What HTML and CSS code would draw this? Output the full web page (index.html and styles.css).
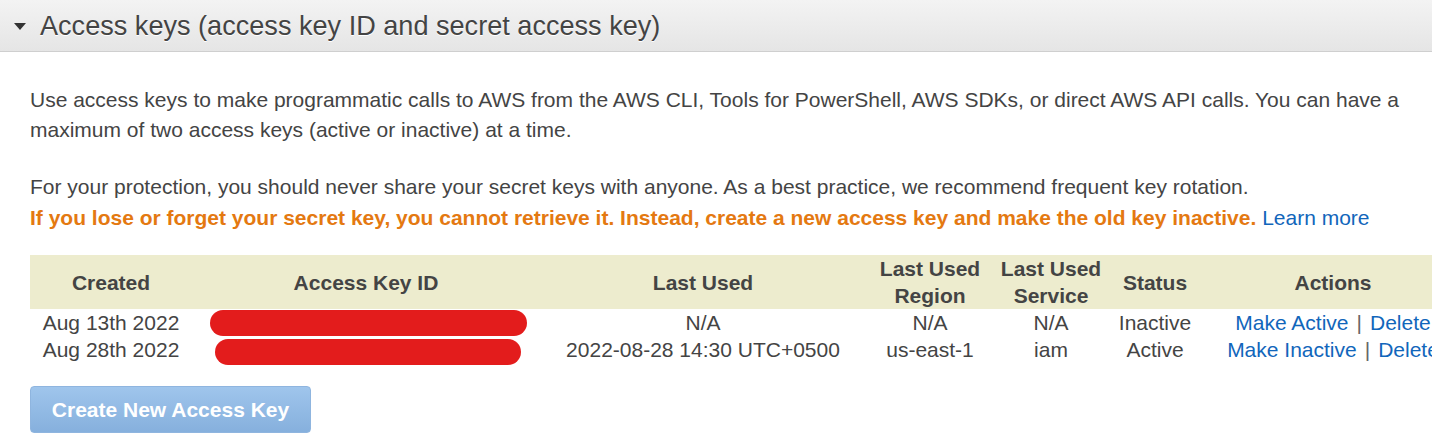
FILE: index.html
```html
<!DOCTYPE html>
<html>
<head>
<meta charset="utf-8">
<link rel="stylesheet" href="styles.css">
</head>
<body>
<div class="section-head">
  <span class="caret"></span>
  <h2 class="title">Access keys (access key ID and secret access key)</h2>
</div>
<div class="content">
  <p class="para">Use access keys to make programmatic calls to AWS from the AWS CLI, Tools for PowerShell, AWS SDKs, or direct AWS API calls. You can have a maximum of two access keys (active or inactive) at a time.</p>
  <p class="para para2">For your protection, you should never share your secret keys with anyone. As a best practice, we recommend frequent key rotation.<br><span class="warn">If you lose or forget your secret key, you cannot retrieve it. Instead, create a new access key and make the old key inactive.</span> <a class="link" href="#">Learn more</a></p>
  <table class="keys">
    <colgroup>
      <col class="c-created"><col class="c-id"><col class="c-used"><col class="c-region"><col class="c-service"><col class="c-status"><col class="c-actions">
    </colgroup>
    <thead>
      <tr>
        <th>Created</th>
        <th>Access Key ID</th>
        <th>Last Used</th>
        <th>Last Used<br>Region</th>
        <th>Last Used<br>Service</th>
        <th>Status</th>
        <th>Actions</th>
      </tr>
    </thead>
    <tbody>
      <tr>
        <td>Aug 13th 2022</td>
        <td class="redact-cell"><span class="redact r1"></span></td>
        <td>N/A</td>
        <td>N/A</td>
        <td>N/A</td>
        <td>Inactive</td>
        <td class="actions"><a class="link" href="#">Make Active</a><span class="sep">|</span><a class="link" href="#">Delete</a></td>
      </tr>
      <tr>
        <td>Aug 28th 2022</td>
        <td class="redact-cell"><span class="redact r2"></span></td>
        <td>2022-08-28 14:30 UTC+0500</td>
        <td>us-east-1</td>
        <td>iam</td>
        <td>Active</td>
        <td class="actions"><a class="link" href="#">Make Inactive</a><span class="sep">|</span><a class="link" href="#">Delete</a></td>
      </tr>
    </tbody>
  </table>
  <button class="create-btn">Create New Access Key</button>
</div>
</body>
</html>
```
FILE: styles.css
```css
html, body {
  margin: 0;
  padding: 0;
  background: #fff;
  overflow: hidden;
}
body {
  font-family: "Liberation Sans", Arial, sans-serif;
  color: #444;
  width: 1432px;
}
.section-head {
  height: 52px;
  display: flex;
  align-items: center;
  background: linear-gradient(#f3f3f3, #e5e5e5);
  border-bottom: 1px solid #cfcfcf;
  padding-left: 14px;
  box-sizing: border-box;
}
.caret {
  width: 0;
  height: 0;
  border-left: 6.5px solid transparent;
  border-right: 6.5px solid transparent;
  border-top: 7px solid #333;
  margin-right: 14px;
  margin-top: 1px;
}
.title {
  margin: 0;
  font-weight: normal;
  font-size: 27.1px;
  color: #444;
  text-shadow: 0 1px 0 #fff;
}
.content {
  padding: 33px 0 0 30px;
}
.para {
  margin: 0;
  font-size: 21px;
  line-height: 30px;
  width: 1390px;
}
.para2 {
  margin-top: 26px;
  line-height: 31px;
}
.warn {
  color: #e47911;
  font-weight: bold;
}
.link {
  color: #1166bb;
  text-decoration: none;
}
.keys {
  margin-top: 22px;
  border-collapse: collapse;
  table-layout: fixed;
  width: 1434px;
  font-size: 21px;
}
.c-created { width: 162px; }
.c-id { width: 348px; }
.c-used { width: 326px; }
.c-region { width: 128px; }
.c-service { width: 114px; }
.c-status { width: 94px; }
.c-actions { width: 262px; }
.keys thead tr {
  background: #edecce;
}
.keys th {
  font-weight: bold;
  height: 53px;
  line-height: 27px;
  padding: 0;
  text-align: center;
  color: #444;
  white-space: nowrap;
}
.keys td {
  height: 27px;
  line-height: 27px;
  padding: 0;
  text-align: center;
  white-space: nowrap;
  overflow: visible;
}
.redact-cell {
  position: relative;
}
.redact {
  position: absolute;
  background: #e31c1c;
  border-radius: 14px;
  height: 26px;
}
.r1 {
  left: 18px;
  width: 317px;
  top: 1px;
}
.r2 {
  left: 23px;
  width: 306px;
  top: 3px;
}
.sep {
  color: #666;
  margin: 0 8px;
}
.create-btn {
  margin-top: 23px;
  width: 281px;
  height: 47px;
  border: 1px solid #8fb5df;
  border-radius: 4px;
  background: linear-gradient(#9fc5ec, #86b0dd);
  color: #fff;
  font-family: "Liberation Sans", Arial, sans-serif;
  font-weight: bold;
  font-size: 21px;
  padding: 0;
  display: block;
}
```
